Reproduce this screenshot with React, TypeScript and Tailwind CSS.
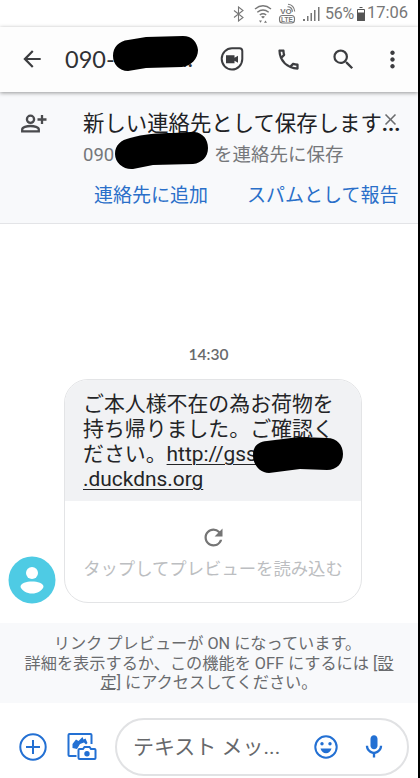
import type { ReactNode } from "react";
import { MdArrowBack, MdClose, MdMoreVert, MdOutlineMic, MdOutlinePhone, MdRefresh, MdSearch } from "react-icons/md";

const Redaction = ({ className, d, viewBox }: { className: string; d: string; viewBox: string }) => (
  <svg viewBox={viewBox} className={`absolute ${className}`} fill="black">
    <path d={d} />
  </svg>
);

const StatusBar = () => (
  <div className="flex h-[27px] items-center pl-[233px] text-[#777]">
    <svg viewBox="0 0 12 16" className="h-4 w-3 shrink-0" fill="none" stroke="currentColor" strokeWidth="1.1">
      <path d="M1 4.500l9 7-4.500 3.500V1L10 4.500l-9 7" />
    </svg>
    <svg viewBox="0 0 18 20" className="ml-[9px] h-5 w-[18px] shrink-0" fill="none" stroke="currentColor" strokeWidth="1.4">
      <path d="M1 5q8-6.500 16 0M3.300 8.200q5.700-4.500 11.400 0M5.800 11q3.200-2.600 6.400 0" />
      <path d="M7 12.700q2-1.600 4 0L9 14.500zM5 16.500h3l-1.500 2.200zM10 18.700h3L11.500 16.500z" fill="currentColor" stroke="none" />
    </svg>
    <svg viewBox="0 0 20 22" className="ml-[6px] h-[22px] w-5 shrink-0" fill="none" stroke="currentColor">
      <rect x="1.500" y="12.500" width="15" height="7.500" rx="3" strokeWidth="1.100" />
      <text x="9" y="18.700" textAnchor="middle" fill="currentColor" stroke="none" className="font-['Liberation_Sans'] text-[6.5px] font-bold">LTE</text>
      <text x="8" y="11" textAnchor="middle" fill="currentColor" stroke="none" className="font-['Liberation_Sans'] text-[8px] font-bold">VO</text>
      <path d="M9.500 3.800q4.500 0 5 5M10 1.200q6 .500 6.700 7.300" strokeWidth="1.100" />
    </svg>
    <svg viewBox="0 0 18 14" className="ml-[5px] h-[14px] w-[18px] shrink-0" fill="currentColor">
      <path d="M0 12h2v2H0zM4 9h1.500v5H4zM7.500 6H9v8H7.500zM11 3h1.500v11H11zM15 0h1.500v14H15z" />
    </svg>
    <span className="ml-[4px] w-[30px] text-[16px] tracking-[-0.2px] text-[#777]">56%</span>
    <svg viewBox="0 0 8 14" className="ml-[2px] h-[14px] w-2 shrink-0" fill="none" stroke="#555">
      <path d="M2.500.5h3M.5 2.500h7v11h-7z" />
      <path d="M.5 6h7v7.500h-7z" fill="#555" />
    </svg>
    <span className="ml-[2px] text-[16.500px] text-[#777]">17:06</span>
  </div>
);

const ChatHeader = () => (
  <header className="relative z-10 flex h-[65px] items-center bg-[#fdfdfd] pb-[1px] text-[#3c3d40] shadow-[0_1px_4px_rgba(0,0,0,0.4)]">
    <MdArrowBack className="ml-[19px] size-[26px] shrink-0" />
    <div className="relative ml-[20px] h-8 w-[129px] font-['Lato'] text-[23.500px] leading-8 text-[#303134]">
      090-
      <span className="absolute right-[1px] bottom-[1px]">...</span>
      <Redaction
        className="top-[-7px] left-[47px] h-[36px] w-[86px]"
        viewBox="112 35 86 36"
        d="M113 55c0-9 6-15 15-16l18-3 37-1c9 0 14 6 15 14 0 9-7 16-16 17l-36 1-18 3c-9 0-15-7-15-15z"
      />
    </div>
    <svg viewBox="0 0 24 24" className="ml-[26px] size-6 shrink-0" fill="none" stroke="currentColor" strokeWidth="2">
      <path d="M12 1.200h7.500q2.800 0 2.800 2.800v8A10.300 10.700 0 1 1 12 1.200z" />
      <path d="M6 8.200h8.500v2.500l3.500-2v7l-3.500-2v2.500H6z" fill="currentColor" stroke="none" />
    </svg>
    <MdOutlinePhone className="ml-[31px] size-[27px] shrink-0" />
    <MdSearch className="ml-[28px] size-[27px] shrink-0" />
    <MdMoreVert className="ml-[22px] size-[27px] shrink-0" />
  </header>
);

const SaveContactBanner = () => (
  <section className="flex h-[132px] border-b border-[#e3e4e7] bg-[#f8f9fb]">
    <svg viewBox="0 0 28 20" className="mt-[22px] ml-5 h-5 w-7 shrink-0" fill="none" stroke="#4a4b4e" strokeWidth="2.3">
      <circle cx="10.500" cy="5.300" r="3.600" />
      <path d="M2.200 17.300v-1.800c0-2.300 4.500-3.500 8.300-3.500s8.300 1.200 8.300 3.500v1.800zM17.500 5.500h9M22 1v9" />
    </svg>
    <div className="relative ml-[35px] flex-1 whitespace-nowrap">
      <p className="mt-[16px] text-[21.400px] leading-8 text-[#202124]">
        新しい連絡先として保存します<span className="font-bold">...</span>
      </p>
      <div className="mt-[2px] flex text-[18.500px] leading-[26px] text-[#75777a]">
        <span className="w-[131px]">090</span>
        <span>を連絡先に保存</span>
      </div>
      <div className="mt-[14px] ml-[11px] flex gap-[39px] text-[19px] leading-7 text-[#2a6fc9]">
        <button>連絡先に追加</button>
        <button>スパムとして報告</button>
      </div>
      <MdClose className="absolute top-[18px] left-[298px] size-[19px] text-[#6a6b6d]" />
      <Redaction
        className="top-[40px] left-[32px] h-[38px] w-[94px]"
        viewBox="115 132 94 38"
        d="M115 154c0-9 6-14 15-16 13-4 29-5 43-5l18-1c10-1 17 6 17 16 0 9-6 15-15 16l-40 1-20 4c-9 1-18-6-18-15z"
      />
    </div>
  </section>
);

const Bubble = ({ children }: { children: ReactNode }) => (
  <div className="w-[298px] overflow-hidden rounded-[24px] border border-[#e3e4e6] bg-white">
    {children}
    <div className="flex h-[101px] flex-col items-center pt-[23px] whitespace-nowrap">
      <MdRefresh className="size-[27px] text-[#757575]" />
      <span className="mt-[5px] text-[17.350px] leading-[26px] text-[#bcbec1]">
        タップしてプレビューを読み込む
      </span>
    </div>
  </div>
);

const Conversation = () => (
  <main className="h-[399px] pt-[118px]">
    <p className="pr-[1px] text-center font-['Lato'] text-[15.500px] leading-6 font-semibold text-[#686a6c]">14:30</p>
    <div className="mt-[13px] flex items-end pl-2">
      <svg viewBox="0 0 48 48" className="relative top-[1px] size-[48px] shrink-0">
        <circle cx="24" cy="24" r="23.500" fill="#4ecbe4" />
        <circle cx="24" cy="17" r="6" fill="white" />
        <path d="M12.500 31c0-4 6-5.500 11.500-5.500S35.500 27 35.500 31c-2 4-6 6.500-11.500 6.500S14.500 35 12.500 31z" fill="white" />
      </svg>
      <div className="ml-2">
        <Bubble>
          <div className="relative h-[121px] bg-[#f1f2f4] pt-[12px] pl-[18px] text-[20.900px] leading-[25px] whitespace-nowrap text-[#242527]">
            <p>ご本人様不在の為お荷物を</p>
            <p>持ち帰りました。ご確認く</p>
            <p>
              ださい。<a className="underline decoration-1 underline-offset-[3px]">http://gss</a>
            </p>
            <p>
              <a className="underline decoration-1 underline-offset-[3px]">.duckdns.org</a>
            </p>
            <Redaction
              className="top-[57px] left-[188px] h-[36px] w-[91px]"
              viewBox="253 437 91 36"
              d="M253 455c0-9 5-13 14-14l32-4 28 1c10 0 16 7 16 16 0 9-6 16-16 16l-27-1-31 4c-9 0-16-8-16-18z"
            />
          </div>
        </Bubble>
      </div>
    </div>
  </main>
);

const PreviewNotice = () => (
  <section className="flex h-[80px] flex-col items-center bg-[#f8f9fb] pt-[11px] text-[16.200px] leading-[19.500px] whitespace-nowrap text-[#696b6e]">
    <p className="pr-[3px]">リンク プレビューが ON になっています。</p>
    <p>
      詳細を表示するか、この機能を OFF にするには <span className="underline">[設</span>
    </p>
    <p>
      <span className="underline">定]</span> にアクセスしてください。
    </p>
  </section>
);

const Composer = () => (
  <footer className="flex h-[75px] items-center pt-[12px] text-[#2370d3]">
    <svg viewBox="0 0 28 28" className="ml-[19px] size-7 shrink-0" fill="none" stroke="currentColor" strokeWidth="2">
      <circle cx="14" cy="14" r="12.700" />
      <path d="M14 7v14M7 14h14" />
    </svg>
    <svg viewBox="0 0 30 29" className="ml-5 h-[29px] w-[30px] shrink-0" fill="none" stroke="currentColor" strokeWidth="2">
      <path d="M9.500 24H2.500q-1 0-1-1V3q0-1 1-1h21q1 0 1 1v9" />
      <path d="M5.500 16V12l3.500-4.500 2.500 1.500 4-4 1 2.500 2-1 2 4.500-1.500 1.500-2-2-4 1.500-3 5z" fill="currentColor" stroke="none" />
      <path d="M12.500 17h3.500l1.500-2h5l1.500 2h3.500q1 0 1 1v8q0 1-1 1h-15q-1 0-1-1v-8q0-1 1-1z" />
      <circle cx="20" cy="21.800" r="2.700" fill="currentColor" stroke="none" />
    </svg>
    <div className="ml-[18px] flex h-[58px] w-[294px] items-center rounded-full border-2 border-[#e1e2e4] pl-4">
      <span className="w-[181px] pt-[2px] text-[21px] whitespace-nowrap text-[#66686b]">テキスト メッ...</span>
      <svg viewBox="0 0 24 24" className="size-6 shrink-0" fill="none" stroke="currentColor" strokeWidth="2">
        <circle cx="12" cy="12" r="10.700" />
        <circle cx="8" cy="8.700" r="1.700" fill="currentColor" stroke="none" />
        <circle cx="16" cy="8.700" r="1.700" fill="currentColor" stroke="none" />
        <path d="M6.500 13.500h11c-.8 3-3 4.700-5.500 4.700s-4.700-1.700-5.500-4.700z" fill="currentColor" stroke="none" />
      </svg>
      <MdOutlineMic className="ml-[22px] size-[28px] shrink-0" />
    </div>
  </footer>
);

const App = () => {
  return (
    <div className="h-[778px] w-[420px] overflow-hidden border-r-2 border-black bg-white font-['Roboto','Noto_Sans_CJK_JP',sans-serif]">
      <StatusBar />
      <ChatHeader />
      <SaveContactBanner />
      <Conversation />
      <PreviewNotice />
      <Composer />
    </div>
  );
};

export default App;
